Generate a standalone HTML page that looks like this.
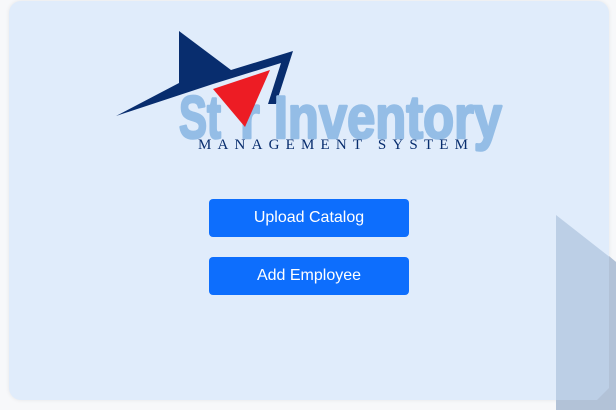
<!DOCTYPE html>
<html><head><meta charset="utf-8"><style>
html,body{margin:0;padding:0;width:616px;height:410px;overflow:hidden;background:#f7f8fa;font-family:"Liberation Sans",Arial,sans-serif}
.card{position:absolute;left:9px;top:1px;width:600px;height:399px;border-radius:12px;background:#e0ecfb;box-shadow:0 0 4px rgba(0,0,0,.08);overflow:hidden}
.btn{position:absolute;left:209px;width:200px;height:38px;background:#0d6efd;color:#fff;border-radius:4px;font-size:16px;line-height:38px;text-align:center}
svg{position:absolute;left:0;top:0}
</style></head><body>
<div class="card"></div>
<svg width="616" height="410">
<polygon points="556,215 616,262 616,410 556,410" fill="#bccfe6"/>
<polygon points="609,256 616,262 616,410 556,410 556,400 597,400 609,388" fill="#b2c2d7"/>
<polygon points="179,31 231,70 293,51 276,104 268,104 281,63 213,84 116,116 179,83" fill="#082d6e"/>
<g fill="#94bde6" stroke="#94bde6" stroke-width="2.5" stroke-linejoin="round" font-family="Liberation Sans" font-weight="bold" font-size="60">
<text x="179" y="138" textLength="42" lengthAdjust="spacingAndGlyphs">St</text>
<text x="240" y="138" textLength="262" lengthAdjust="spacingAndGlyphs">r Inventory</text>
</g>
<polygon points="213,89 270,70 245,127" fill="#ed1c24"/>
<text x="198" y="149" font-family="Liberation Serif" font-size="15" fill="#082d6e" textLength="270" lengthAdjust="spacing">MANAGEMENT SYSTEM</text>
</svg>
<div class="btn" style="top:199px">Upload Catalog</div>
<div class="btn" style="top:257px">Add Employee</div>
</body></html>
